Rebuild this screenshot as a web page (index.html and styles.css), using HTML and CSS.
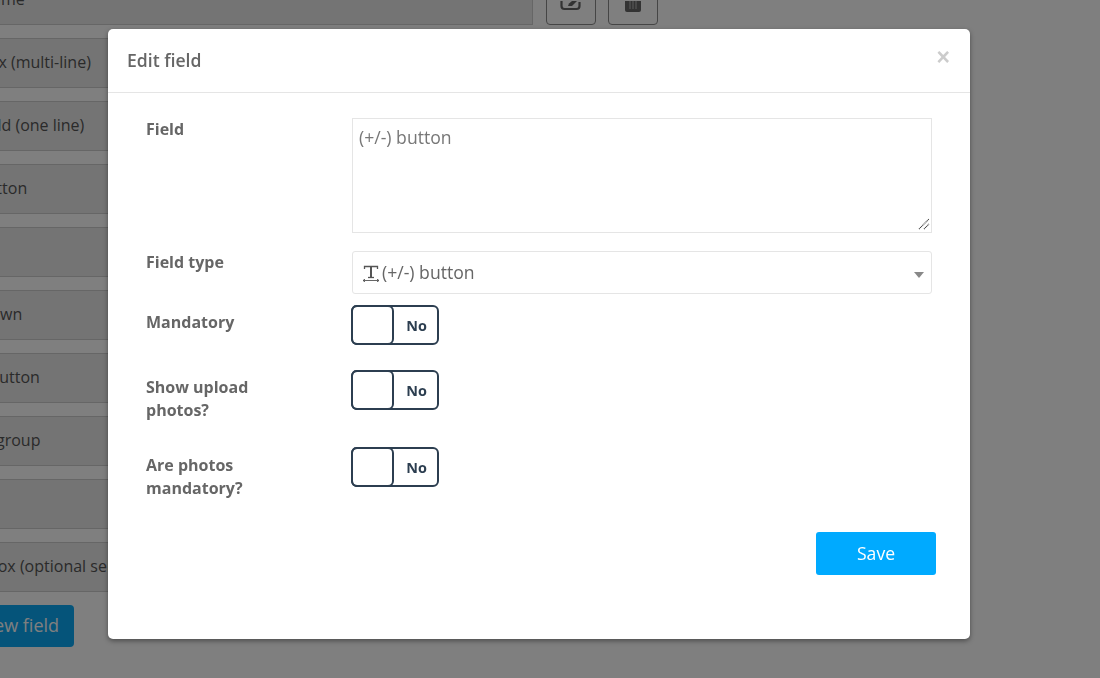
FILE: index.html
```html
<!DOCTYPE html>
<html lang="en">
<head>
<meta charset="utf-8">
<title>Edit field</title>
<link rel="stylesheet" href="styles.css">
</head>
<body>
<main class="page">
  <div class="row-first">
    <div class="row">Field name</div>
    <div class="tools">
      <button class="tool">
        <svg width="22" height="16" viewBox="0 0 22 16" fill="none" stroke="currentColor" stroke-width="2.200"><path d="M1.500 0v5a3 3 0 0 0 3 3h12a3 3 0 0 0 3-3V1"/><path d="M8 5l1-2.500L12 0h5l-5 5z" fill="currentColor" stroke="none"/></svg>
      </button>
      <button class="tool tool-bin">
        <svg width="18" height="16" viewBox="0 0 18 16"><path d="M1 0h16v9a2 2 0 0 1-2 2H3a2 2 0 0 1-2-2z" fill="currentColor"/><path d="M6 0v8M9 0v8M12 0v8" stroke="#a8a8a8" stroke-width="1.300" fill="none"/></svg>
      </button>
    </div>
  </div>
  <div class="row">Text box (multi-line)</div>
  <div class="row">Text field (one line)</div>
  <div class="row">(+/-) button</div>
  <div class="row"></div>
  <div class="row">Dropdown</div>
  <div class="row">Radio button</div>
  <div class="row">Toggle group</div>
  <div class="row"></div>
  <div class="row">Checkbox (optional selection)</div>
  <button class="add">Add new field</button>
</main>
<div class="backdrop"></div>
<section class="modal">
  <header class="modal-head">
    <h2 class="modal-title">Edit field</h2>
    <span class="close">×</span>
  </header>
  <form class="modal-body">
    <div class="field field-text">
      <label class="label">Field</label>
      <textarea class="textarea">(+/-) button</textarea>
      <svg class="grip" width="12" height="12" viewBox="0 0 12 12" fill="none" stroke="#333" stroke-width="1.100" stroke-dasharray="1 .6"><path d="M1 11L11 1M6 11l5-5"/></svg>
    </div>
    <div class="field field-type">
      <label class="label">Field type</label>
      <div class="select">
        <svg class="type-icon" width="18" height="18" viewBox="0 0 18 18" fill="none" stroke="#555"><path d="M2.500 5V2.500h13V5" stroke-width="1.300"/><path d="M9 2.500v11" stroke-width="2"/><path d="M6 13.500h6" stroke-width="1.300"/><path d="M1 16.500h16M1 16.500l2-1.300M1 16.500l2 1.300M17 16.500l-2-1.300M17 16.500l-2 1.300" stroke-width="0.900"/></svg>
        <span class="select-text">(+/-) button</span>
        <i class="caret"></i>
      </div>
    </div>
    <div class="field field-mand">
      <label class="label label-mand">Mandatory</label>
      <div class="toggle"><span class="knob"></span><span class="toggle-text">No</span></div>
    </div>
    <div class="field field-photo">
      <label class="label label-mand">Show upload photos?</label>
      <div class="toggle"><span class="knob"></span><span class="toggle-text">No</span></div>
    </div>
    <div class="field field-photo">
      <label class="label label-last">Are photos mandatory?</label>
      <div class="toggle"><span class="knob"></span><span class="toggle-text">No</span></div>
    </div>
    <div class="actions"><button type="button" class="save">Save</button></div>
  </form>
</section>
</body>
</html>
```

FILE: styles.css
```css
html, body { margin: 0; height: 100%; overflow: hidden; background: #fff; }
body { font-family: "Open Sans", sans-serif; color: #555; position: relative; }
.page { margin: -25px 0 0 -70px; width: 603px; display: flex; flex-direction: column; gap: 13px; align-items: flex-start; }
.row-first { display: flex; gap: 13px; align-items: flex-start; width: 800px; }
.tools { display: flex; gap: 12px; }
.row { box-sizing: border-box; width: 603px; height: 50px; flex: none; border: 1px solid #ccc; background: #e8e8e8; display: flex; align-items: center; padding: 0 12px 2px; font-size: 16px; color: #555; line-height: 24px; }
.tool { box-sizing: border-box; width: 50px; height: 50px; flex: none; background: #fff; border: 1px solid #8a8a8a; border-radius: 4px; color: #666; padding: 25px 0 0; display: flex; align-items: flex-start; justify-content: center; }
.add { box-sizing: border-box; height: 42px; width: 144px; border: 0; border-radius: 4px; background: #0aa8f5; color: #fff; font: 500 18px "Open Sans", sans-serif; padding: 0 0 2px; }
.backdrop { position: fixed; inset: 0; background: rgba(0,0,0,.5); }
.modal { position: absolute; left: 108px; top: 29px; width: 862px; height: 610px; background: #fff; border-radius: 5px; box-shadow: 0 2px 5px rgba(0,0,0,.4); }
.modal-head { box-sizing: border-box; height: 64px; border-bottom: 1px solid #e5e5e5; display: flex; align-items: center; justify-content: space-between; padding: 0 20px 2px 19px; }
.modal-title { margin: 0; font-size: 17.6px; font-weight: 600; color: #666; }
.close { font-size: 23px; font-weight: 700; color: #ccc; line-height: 1; margin-top: -4px; font-family: "Liberation Sans", sans-serif; }
.modal-body { padding: 25px 38px 0; display: flex; flex-direction: column; }
.field { display: grid; grid-template-columns: 206px 580px; position: relative; }
.field-text { height: 133px; }
.field-type { height: 54px; }
.field-mand { height: 65px; }
.field-photo { height: 77px; }
.label { font-size: 16px; font-weight: 700; color: #666; line-height: 23px; padding-right: 80px; }
.label-mand { padding-top: 6px; }
.label-last { padding-top: 7px; }
.textarea { box-sizing: border-box; width: 580px; height: 115px; border: 1px solid #e5e5e5; padding: 6px; font: 17.6px/24px "Open Sans", sans-serif; color: #777; resize: none; outline: 0; margin: 0; }
.grip { position: absolute; left: 772px; top: 100px; }
.select { box-sizing: border-box; width: 580px; height: 43px; border: 1px solid #e5e5e5; border-radius: 3px; display: flex; align-items: center; padding: 0 9px; gap: 2px; font-size: 17.6px; color: #666; position: relative; }
.select-text { margin-top: -2px; }
.caret { position: absolute; right: 7px; top: 20px; border: 5px solid transparent; border-top: 6px solid #888; border-bottom: 0; }
.toggle { box-sizing: border-box; width: 88px; height: 40px; margin-left: -1px; border: 2px solid #2c3e50; border-radius: 6px; display: flex; align-items: center; }
.knob { box-sizing: border-box; width: 43px; height: 40px; margin: -2px 0 -2px -2px; border: 2px solid #2c3e50; border-radius: 6px; flex: none; }
.toggle-text { flex: 1; text-align: center; font-size: 14.4px; font-weight: 700; color: #2c3e50; padding-left: 2px; }
.actions { display: flex; justify-content: flex-end; margin-top: 8px; margin-right: -4px; }
.save { width: 120px; height: 43px; border: 0; border-radius: 3px; background: #00aaff; color: #fff; font: 500 17.6px "Open Sans", sans-serif; padding: 0 0 2px; }
```
